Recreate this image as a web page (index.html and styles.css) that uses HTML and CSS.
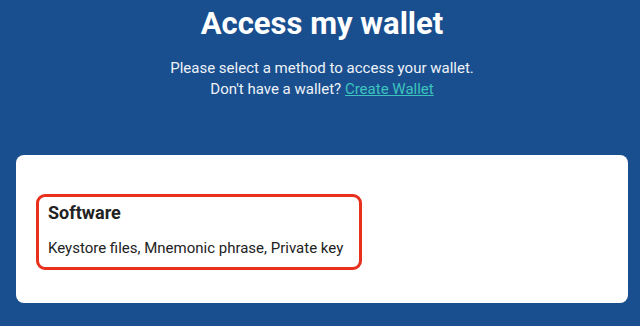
FILE: index.html
```html
<!DOCTYPE html>
<html>
<head>
<meta charset="utf-8">
<link rel="stylesheet" href="styles.css">
</head>
<body>
<div class="page">
  <header class="hero">
    <h1 class="title">Access my wallet</h1>
    <p class="lead">Please select a method to access your wallet.<br>Don't have a wallet? <a class="link" href="#">Create Wallet</a></p>
  </header>
  <section class="card">
    <div class="option">
      <h2 class="opt-title">Software</h2>
      <p class="opt-desc">Keystore files, Mnemonic phrase, Private key</p>
    </div>
  </section>
</div>
</body>
</html>
```
FILE: styles.css
```css
html, body {
  margin: 0;
  padding: 0;
}
body {
  background: #194f8f;
  font-family: Roboto, "Liberation Sans", sans-serif;
  width: 640px;
  height: 326px;
  overflow: hidden;
}
.page {
  padding: 0 12px 0 16px;
}
.hero {
  text-align: center;
  color: #ffffff;
}
.title {
  margin: 0;
  padding-top: 4px;
  font-size: 31px;
  font-weight: 700;
  line-height: 40px;
}
.lead {
  margin: 14px 0 0;
  font-size: 15px;
  line-height: 21px;
  color: #eef2f8;
}
.link {
  color: #3cc3bd;
  text-decoration: underline;
}
.card {
  margin-top: 55px;
  background: #ffffff;
  border-radius: 8px;
  height: 148px;
  padding: 39px 0 0 20px;
  box-sizing: border-box;
}
.option {
  display: inline-block;
  border: 3px solid #e8301c;
  border-radius: 9px;
  padding: 4px 12px 8px 9px;
  width: 299px;
}
.opt-title {
  margin: 0;
  font-size: 18px;
  font-weight: 700;
  line-height: 24px;
  color: #222222;
}
.opt-desc {
  margin: 13px 0 0;
  font-size: 15px;
  line-height: 21px;
  color: #222222;
}
```
